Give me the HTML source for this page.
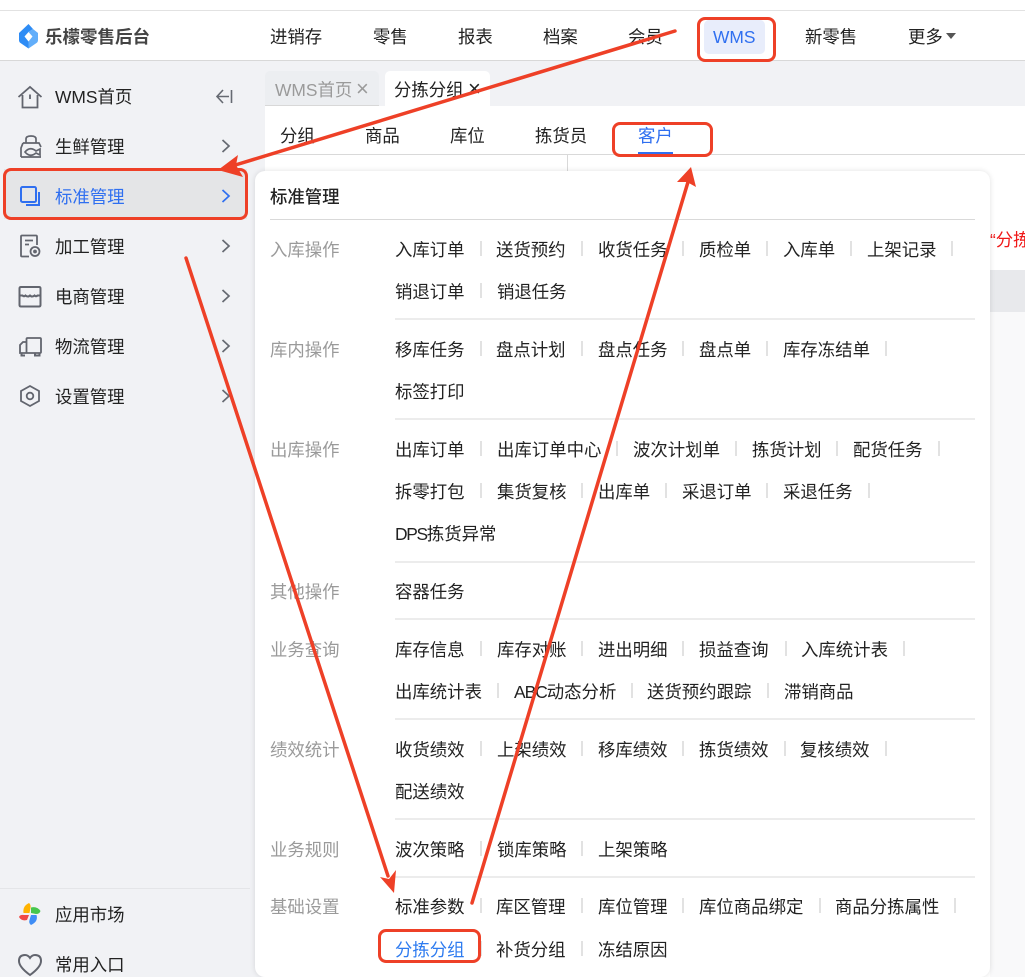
<!DOCTYPE html>
<html lang="zh"><head><meta charset="utf-8"><title>WMS</title>
<style>
*{box-sizing:border-box}
html,body{margin:0;padding:0}
body{width:1025px;height:977px;overflow:hidden;position:relative;background:#f1f2f5;font-family:"Liberation Sans","Noto Sans CJK SC",sans-serif;font-size:17.4px;color:#222}
.t,.l{position:absolute;line-height:24px;height:24px;white-space:nowrap;margin-top:1px}
.g{color:#9a9a9a}
.s{position:absolute;width:2px;height:15px;margin-top:-1px;background:#e2e2e2}
.h{position:absolute;left:395px;width:580px;height:2px;background:#ececec}
.b{position:absolute;height:1px;background:#d9d9d9}
.m{position:absolute;color:#777b85;width:24px;height:24px}
.c{position:absolute;left:221px;width:10px;height:16px}
.r{position:absolute;border:3px solid #ee4027;border-radius:8px}
.x{position:absolute;font-size:22px;line-height:24px;height:24px}
svg{position:absolute;overflow:visible}
</style></head><body>
<div style="position:absolute;left:0;top:0;width:1025px;height:60px;background:#fff"></div>
<div class="b" style="left:0;top:10px;width:1025px;background:#e2e2e2"></div>
<div class="b" style="left:0;top:60px;width:1025px;height:1px;background:#d8d8d8"></div>

<!-- logo -->
<svg style="left:19px;top:24px" width="19" height="25" viewBox="0 0 19 25"><path d="M9.500 0L14 5 9.500 8 5.500 12.500 9.500 17.500V24.500L1.500 19Q0 18 0 16V9Z" fill="#2e8cf5"/><path d="M9.500 24.500L17.500 19Q19 18 19 16V9L14 5 9.500 8 13.500 12.500 9.500 17.500Z" fill="#62aefa"/></svg>
<span class="t" style="left:45px;top:24px;font-size:17.500px;font-weight:700;color:#444">乐檬零售后台</span>

<!-- top nav -->
<span class="t" style="left:270px;top:24px">进销存</span>
<span class="t" style="left:373px;top:24px">零售</span>
<span class="t" style="left:458px;top:24px">报表</span>
<span class="t" style="left:543px;top:24px">档案</span>
<span class="t" style="left:628px;top:24px">会员</span>
<div style="position:absolute;left:704px;top:20px;width:61px;height:34px;background:#e8edfb;border-radius:5px"></div>
<span class="t" style="left:713px;top:24px;color:#2f6ff0">WMS</span>
<span class="t" style="left:805px;top:24px">新零售</span>
<span class="t" style="left:908px;top:24px">更多</span>
<svg style="left:946px;top:33px" width="11" height="6"><path d="M0 0H10L5 6Z" fill="#555"/></svg>

<!-- sidebar -->
<div style="position:absolute;left:4px;top:169px;width:243px;height:50px;background:#e4e5e7"></div>
<svg class="m" style="left:18px;top:85px" viewBox="0 0 24 24" fill="none" stroke="#62656e" stroke-width="1.800"><path d="M0.500 12L12 2 23.500 12M4.500 10V22.500H19.500V10M12 9.500V14"/></svg>
<span class="t" style="left:55px;top:84px">WMS首页</span>
<svg style="left:216px;top:89px" width="17" height="15" fill="none" stroke="#666a72" stroke-width="1.600"><path d="M7 1L1 7.500 7 14M1 7.500H13M15.500 1V14"/></svg>

<svg class="m" style="left:19px;top:135px" viewBox="0 0 24 24" fill="none" stroke="#62656e" stroke-width="1.700"><path d="M7 8V4Q7 1 12 1T17 4V8M4 8H20L22 12M2 22V13L4 8M2 22H22M6 17Q11 11 17 16L21 14V20L17 18Q11 23 6 17Z"/></svg>
<span class="t" style="left:55px;top:134px">生鲜管理</span>
<svg class="c" style="top:138px" fill="none" stroke="#666a72" stroke-width="1.700"><path d="M1.500 2L8 8 1.500 14"/></svg>

<svg class="m" style="left:18px;top:184px" viewBox="0 0 24 24" fill="none" stroke="#2f6ff0" stroke-width="2"><rect x="3" y="3" width="15" height="15" rx="1.500"/><path d="M21 8V21H8"/></svg>
<span class="t" style="left:55px;top:184px;color:#2f6ff0">标准管理</span>
<svg class="c" style="top:188px" fill="none" stroke="#2f6ff0" stroke-width="1.700"><path d="M1.500 2L8 8 1.500 14"/></svg>

<svg class="m" style="left:18px;top:234px" viewBox="0 0 24 24" fill="none" stroke="#62656e" stroke-width="1.800"><path d="M11 22.500H4Q3 22.500 3 21.500V2.500Q3 1.500 4 1.500H18Q19 1.500 19 2.500V11M7 6.500H15M7 10.500H11"/><circle cx="17" cy="17.500" r="4.500"/><circle cx="17" cy="17.500" r="1" fill="#62656e"/></svg>
<span class="t" style="left:55px;top:234px">加工管理</span>
<svg class="c" style="top:238px" fill="none" stroke="#666a72" stroke-width="1.700"><path d="M1.500 2L8 8 1.500 14"/></svg>

<svg class="m" style="left:18px;top:285px" viewBox="0 0 24 24" fill="none" stroke="#62656e" stroke-width="2"><path d="M3 2H21Q22.500 2 22.500 3.500V20Q22.500 21.500 21 21.500H3Q1.500 21.500 1.500 20V3.500Q1.500 2 3 2ZM1.500 10.500H4.500Q6 12 7.500 10.500 10 12.500 12 10.500 14 12.500 16.500 10.500 18 12 19.500 10.500H22.500"/></svg>
<span class="t" style="left:55px;top:284px">电商管理</span>
<svg class="c" style="top:288px" fill="none" stroke="#666a72" stroke-width="1.700"><path d="M1.500 2L8 8 1.500 14"/></svg>

<svg class="m" style="left:18px;top:334px" viewBox="0 0 24 24" fill="none" stroke="#62656e" stroke-width="1.800"><path d="M8.500 19V5Q8.500 4 9.500 4H22Q23 4 23 5V18Q23 19 22 19ZM8.500 8H5L2 11V19H8.500"/><path d="M3.500 19.500V21.500H7M17 19.500V21.500H21.500V19.500" stroke-width="2"/></svg>
<span class="t" style="left:55px;top:334px">物流管理</span>
<svg class="c" style="top:338px" fill="none" stroke="#666a72" stroke-width="1.700"><path d="M1.500 2L8 8 1.500 14"/></svg>

<svg class="m" style="left:18px;top:384px" viewBox="0 0 24 24" fill="none" stroke="#62656e" stroke-width="1.800"><path d="M12 2L21 7V17L12 22 3 17V7Z"/><circle cx="12" cy="12" r="3.300"/></svg>
<span class="t" style="left:55px;top:384px">设置管理</span>
<svg class="c" style="top:388px" fill="none" stroke="#666a72" stroke-width="1.700"><path d="M1.500 2L8 8 1.500 14"/></svg>

<div class="b" style="left:0;top:888px;width:250px;background:#e4e5e8"></div>
<svg style="left:19px;top:903px" width="22" height="22" viewBox="0 0 22 22"><path d="M10.500 10H4.500Q3.500 3 10 0 12 1.500 11.500 5Z" fill="#ffb300"/><path d="M12 10V4.500Q18 3 21.500 8 20.500 11 17 11Z" fill="#46c64c"/><path d="M10 12H5Q1 11.500 0 14 2.500 18.500 8 17Z" fill="#f04a45"/><path d="M12 12H17.500Q19.500 18.500 12 22 9.500 20 10.500 17Z" fill="#3f8df5"/></svg>
<span class="t" style="left:55px;top:902px">应用市场</span>
<svg class="m" style="left:18px;top:953px" viewBox="0 0 24 24" fill="none" stroke="#62656e" stroke-width="2"><path d="M12 22Q1 14 1 8 1 2 7 2 10 2 12 5 14 2 17 2 23 2 23 8 23 14 12 22Z"/></svg>
<span class="t" style="left:55px;top:952px">常用入口</span>

<!-- tabs & content -->
<div style="position:absolute;left:265px;top:71px;width:114px;height:35px;background:#eceef1;border-radius:5px 5px 0 0;border-bottom:1px solid #d8d8d8"></div>
<span class="t g" style="left:275px;top:77px">WMS首页</span>
<span class="x g" style="left:356px;top:77px">×</span>
<div style="position:absolute;left:385px;top:71px;width:105px;height:36px;background:#fff;border-radius:5px 5px 0 0"></div>
<span class="t" style="left:394px;top:77px">分拣分组</span>
<span class="x" style="left:468px;top:77px">×</span>
<div style="position:absolute;left:265px;top:106px;width:760px;height:871px;background:#fff"></div>
<span class="t" style="left:280px;top:123px">分组</span>
<span class="t" style="left:365px;top:123px">商品</span>
<span class="t" style="left:450px;top:123px">库位</span>
<span class="t" style="left:535px;top:123px">拣货员</span>
<span class="t" style="left:638px;top:123px;color:#2f6ff0">客户</span>
<div style="position:absolute;left:638px;top:152px;width:35px;height:3px;background:#2f6ff0"></div>
<div class="b" style="left:265px;top:154px;width:760px"></div>
<div class="b" style="left:567px;top:155px;width:1px;height:20px"></div>
<span class="t" style="left:990px;top:227px;color:#f01818">“分拣</span>
<div style="position:absolute;left:990px;top:270px;width:35px;height:42px;background:#e8e9ec"></div>
<div style="position:absolute;left:990px;top:312px;width:35px;height:665px;background:#f9f9fa"></div>

<!-- mega panel -->
<div style="position:absolute;left:255px;top:171px;width:735px;height:806px;background:#fff;border-radius:10px 10px 10px 10px;box-shadow:0 0 6px rgba(0,0,0,.12)"></div>
<span class="t" style="left:270px;top:184px;font-weight:500">标准管理</span>
<div class="b" style="left:270px;top:219px;width:705px"></div>

<span class="t g" style="left:270px;top:237px">入库操作</span>
<span class="l" style="left:395px;top:237px">入库订单</span><i class="s" style="left:480px;top:242px"></i>
<span class="l" style="left:496px;top:237px">送货预约</span><i class="s" style="left:581px;top:242px"></i>
<span class="l" style="left:598px;top:237px">收货任务</span><i class="s" style="left:682px;top:242px"></i>
<span class="l" style="left:699px;top:237px">质检单</span><i class="s" style="left:766px;top:242px"></i>
<span class="l" style="left:783px;top:237px">入库单</span><i class="s" style="left:850px;top:242px"></i>
<span class="l" style="left:867px;top:237px">上架记录</span><i class="s" style="left:951px;top:242px"></i>
<span class="l" style="left:395px;top:279px">销退订单</span><i class="s" style="left:480px;top:284px"></i>
<span class="l" style="left:497px;top:279px">销退任务</span>
<div class="h" style="top:318px"></div>

<span class="t g" style="left:270px;top:337px">库内操作</span>
<span class="l" style="left:395px;top:337px">移库任务</span><i class="s" style="left:480px;top:342px"></i>
<span class="l" style="left:496px;top:337px">盘点计划</span><i class="s" style="left:581px;top:342px"></i>
<span class="l" style="left:598px;top:337px">盘点任务</span><i class="s" style="left:682px;top:342px"></i>
<span class="l" style="left:699px;top:337px">盘点单</span><i class="s" style="left:766px;top:342px"></i>
<span class="l" style="left:783px;top:337px">库存冻结单</span><i class="s" style="left:885px;top:342px"></i>
<span class="l" style="left:395px;top:379px">标签打印</span>
<div class="h" style="top:418px"></div>

<span class="t g" style="left:270px;top:437px">出库操作</span>
<span class="l" style="left:395px;top:437px">出库订单</span><i class="s" style="left:480px;top:442px"></i>
<span class="l" style="left:497px;top:437px">出库订单中心</span><i class="s" style="left:616px;top:442px"></i>
<span class="l" style="left:633px;top:437px">波次计划单</span><i class="s" style="left:735px;top:442px"></i>
<span class="l" style="left:752px;top:437px">拣货计划</span><i class="s" style="left:836px;top:442px"></i>
<span class="l" style="left:853px;top:437px">配货任务</span><i class="s" style="left:938px;top:442px"></i>
<span class="l" style="left:395px;top:479px">拆零打包</span><i class="s" style="left:480px;top:484px"></i>
<span class="l" style="left:497px;top:479px">集货复核</span><i class="s" style="left:581px;top:484px"></i>
<span class="l" style="left:598px;top:479px">出库单</span><i class="s" style="left:665px;top:484px"></i>
<span class="l" style="left:682px;top:479px">采退订单</span><i class="s" style="left:766px;top:484px"></i>
<span class="l" style="left:783px;top:479px">采退任务</span><i class="s" style="left:868px;top:484px"></i>
<span class="l" style="left:395px;top:521px"><span style="letter-spacing:-1.300px">DPS</span>拣货异常</span>
<div class="h" style="top:561px"></div>

<span class="t g" style="left:270px;top:579px">其他操作</span>
<span class="l" style="left:395px;top:579px">容器任务</span>
<div class="h" style="top:618px"></div>

<span class="t g" style="left:270px;top:637px">业务查询</span>
<span class="l" style="left:395px;top:637px">库存信息</span><i class="s" style="left:480px;top:642px"></i>
<span class="l" style="left:497px;top:637px">库存对账</span><i class="s" style="left:581px;top:642px"></i>
<span class="l" style="left:598px;top:637px">进出明细</span><i class="s" style="left:682px;top:642px"></i>
<span class="l" style="left:699px;top:637px">损益查询</span><i class="s" style="left:785px;top:642px"></i>
<span class="l" style="left:801px;top:637px">入库统计表</span><i class="s" style="left:903px;top:642px"></i>
<span class="l" style="left:395px;top:679px">出库统计表</span><i class="s" style="left:497px;top:684px"></i>
<span class="l" style="left:514px;top:679px"><span style="letter-spacing:-1px">ABC</span>动态分析</span><i class="s" style="left:631px;top:684px"></i>
<span class="l" style="left:647px;top:679px">送货预约跟踪</span><i class="s" style="left:767px;top:684px"></i>
<span class="l" style="left:784px;top:679px">滞销商品</span>
<div class="h" style="top:718px"></div>

<span class="t g" style="left:270px;top:737px">绩效统计</span>
<span class="l" style="left:395px;top:737px">收货绩效</span><i class="s" style="left:480px;top:742px"></i>
<span class="l" style="left:497px;top:737px">上架绩效</span><i class="s" style="left:581px;top:742px"></i>
<span class="l" style="left:598px;top:737px">移库绩效</span><i class="s" style="left:682px;top:742px"></i>
<span class="l" style="left:699px;top:737px">拣货绩效</span><i class="s" style="left:784px;top:742px"></i>
<span class="l" style="left:800px;top:737px">复核绩效</span><i class="s" style="left:885px;top:742px"></i>
<span class="l" style="left:395px;top:779px">配送绩效</span>
<div class="h" style="top:818px"></div>

<span class="t g" style="left:270px;top:837px">业务规则</span>
<span class="l" style="left:395px;top:837px">波次策略</span><i class="s" style="left:480px;top:842px"></i>
<span class="l" style="left:497px;top:837px">锁库策略</span><i class="s" style="left:581px;top:842px"></i>
<span class="l" style="left:598px;top:837px">上架策略</span>
<div class="h" style="top:876px"></div>

<span class="t g" style="left:270px;top:894px">基础设置</span>
<span class="l" style="left:395px;top:894px">标准参数</span><i class="s" style="left:480px;top:899px"></i>
<span class="l" style="left:496px;top:894px">库区管理</span><i class="s" style="left:581px;top:899px"></i>
<span class="l" style="left:598px;top:894px">库位管理</span><i class="s" style="left:682px;top:899px"></i>
<span class="l" style="left:699px;top:894px">库位商品绑定</span><i class="s" style="left:819px;top:899px"></i>
<span class="l" style="left:835px;top:894px">商品分拣属性</span><i class="s" style="left:954px;top:899px"></i>
<span class="l" style="left:395px;top:937px;color:#2f7cf0">分拣分组</span><i class="s" style="left:480px;top:942px"></i>
<span class="l" style="left:496px;top:937px">补货分组</span><i class="s" style="left:581px;top:942px"></i>
<span class="l" style="left:598px;top:937px">冻结原因</span>

<!-- annotations -->
<div class="r" style="left:697px;top:17px;width:79px;height:45px"></div>
<div class="r" style="left:3px;top:168px;width:245px;height:52px"></div>
<div class="r" style="left:612px;top:122px;width:101px;height:35px"></div>
<div class="r" style="left:378px;top:929px;width:103px;height:34px"></div>
<svg style="left:0;top:0" width="1025" height="977" fill="none" stroke="#ee4027" stroke-width="3.500" stroke-linecap="round">
<path d="M675 31L232 166"/><path d="M218 170L238 155 236 165 243 177Z" fill="#ee4027" stroke="none"/>
<path d="M186 258L388 876"/><path d="M394 893L380 877 389 879 396 870Z" fill="#ee4027" stroke="none"/>
<path d="M472 903L688 182"/><path d="M691 167L696 187 687 182 677 182Z" fill="#ee4027" stroke="none"/>
</svg>
</body></html>
